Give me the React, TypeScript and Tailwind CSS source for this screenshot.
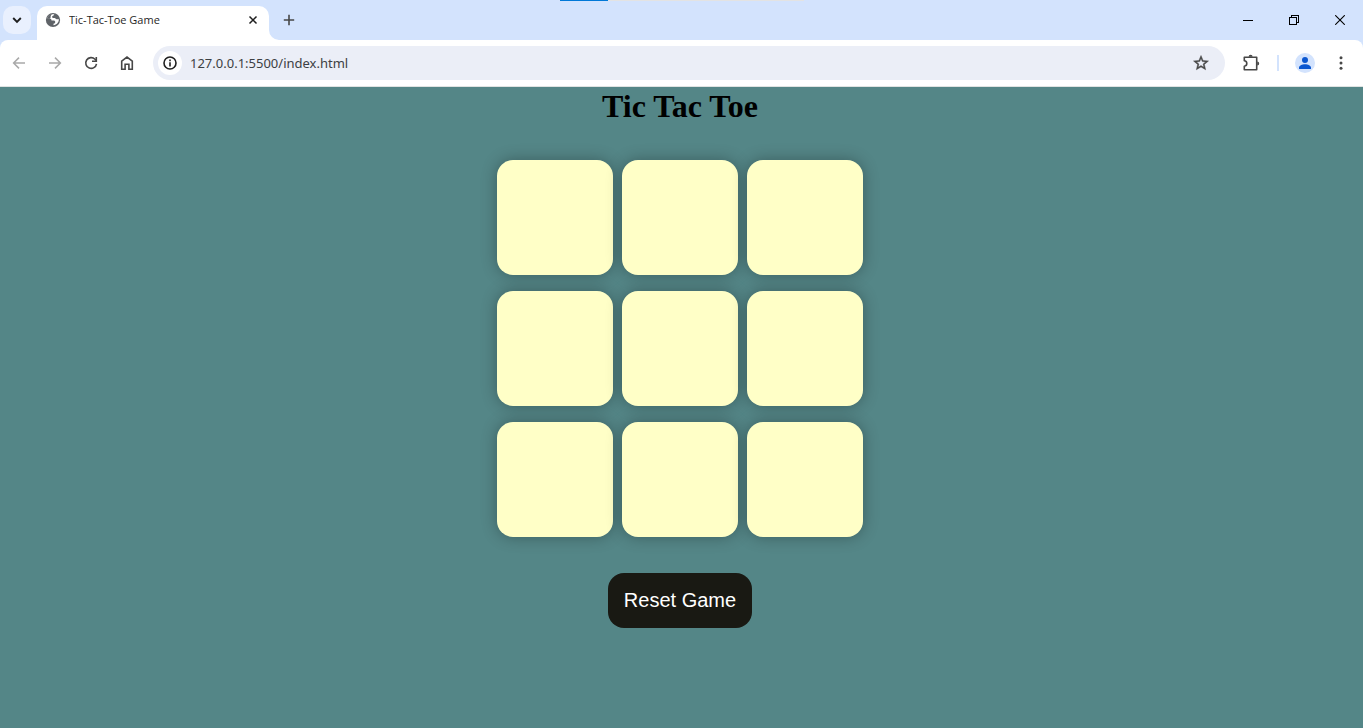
import React, { useState } from "react";

const iconButton = "flex size-9 shrink-0 items-center justify-center rounded-full text-[#474747] hover:bg-black/5";
const arrowButton = "flex size-9 shrink-0 items-center justify-center text-[#a9a9a9]";

function TabStrip() {
  return (
    <header className="relative flex h-10 shrink-0 bg-[#d3e3fd]">
      <div className="absolute inset-x-0 top-0 mx-auto flex h-px w-61 bg-[#e3e3e3]">
        <div className="w-12 bg-[#0078d7]" />
      </div>
      <button aria-label="Search tabs" className="my-1.5 ml-[3px] flex size-7 items-center justify-center rounded-[10px] bg-[#e9f0fe] text-[#1f1f1f]">
        <svg width="10" height="10" viewBox="0 0 10 10" fill="none" stroke="currentColor" strokeWidth="1.9">
          <path d="M1.2 3 5 6.8 8.8 3" />
        </svg>
      </button>
      <div className="mt-1.5 ml-1.5 flex w-58 items-center rounded-t-[10px] bg-white pr-2.5 pb-1.5 pl-2 text-[#1f1f1f]">
        <svg className="mr-2 shrink-0" width="16" height="16" viewBox="0 0 16 16">
          <circle cx="8" cy="8" r="7.1" fill="#5f6368" />
          <path
            d="M9.2 2.3c.1.900-.7 1.500-1.700 1.700-.6.500-.5 1.300.3 1.900h2c.8 0 .9 1.300 1.800 1.300h2.300c0 3-2.200 5.500-5.400 6v-1.500c1.200 0 1.700-.6 1.700-1.700 0-1-.7-1.500-1.600-1.500H6.500c0-1.200-.8-1.900-2-1.900H2.300C2.500 4.300 5.200 1.900 9.200 2.300Z"
            fill="#fff"
          />
          <path d="M2 6.800C2.600 3.900 4.800 2.200 7.200 2.200 6 2.900 5.600 4 5.600 5.200c0 1-.8 1.600-1.700 1.600Z" fill="#5f6368" />
        </svg>
        <span className="grow truncate font-['Open_Sans',sans-serif] text-[11px] leading-4">Tic-Tac-Toe Game</span>
        <button aria-label="Close tab" className="flex size-3 items-center justify-center">
          <svg width="10" height="10" viewBox="0 0 10 10" stroke="currentColor" strokeWidth="1.5">
            <path d="m1.500 1.500 7 7M8.500 1.500l-7 7" />
          </svg>
        </button>
      </div>
      <svg className="shrink-0 self-end" width="10" height="10" viewBox="0 0 10 10">
        <path d="M0 0a10 10 0 0 0 10 10H0Z" fill="#fff" />
      </svg>
      <button aria-label="New tab" className="flex h-10 w-5 items-center justify-center text-[#474747]">
        <svg width="12" height="12" viewBox="0 0 12 12" stroke="currentColor" strokeWidth="1.600">
          <path d="M6 .8v10.400M.8 6h10.400" />
        </svg>
      </button>
      <div className="ml-auto flex text-black">
        <button aria-label="Minimize" className="flex w-[46px] items-center justify-center">
          <svg width="10" height="10" viewBox="0 0 10 10" shapeRendering="crispEdges">
            <path d="M0 5h10v1H0z" />
          </svg>
        </button>
        <button aria-label="Restore" className="flex w-[46px] items-center justify-center">
          <svg width="10" height="10" viewBox="0 0 10 10" fill="none" stroke="currentColor" shapeRendering="crispEdges">
            <path d="M.5 2.500h7v7h-7zM2.500 2.500v-2h7v7h-2" />
          </svg>
        </button>
        <button aria-label="Close" className="flex w-[46px] items-center justify-center">
          <svg width="10" height="10" viewBox="0 0 10 10" stroke="currentColor" strokeWidth="1.100">
            <path d="m.2.2 9.600 9.600M9.800.2.2 9.800" />
          </svg>
        </button>
      </div>
    </header>
  );
}

function Toolbar() {
  const [url, setUrl] = useState("127.0.0.1:5500/index.html");
  return (
    <div className="bg-[#d3e3fd]">
      <div className="flex h-[47px] items-center rounded-t-lg border-b border-[#dfe3e2] bg-white pr-1 pl-px">
        <button aria-label="Back" disabled className={arrowButton}>
          <svg width="16" height="16" viewBox="0 0 16 16" fill="none" stroke="currentColor" strokeWidth="1.500">
            <path d="M14 8H3M8 2.600 2.600 8 8 13.400" />
          </svg>
        </button>
        <button aria-label="Forward" disabled className={arrowButton}>
          <svg width="16" height="16" viewBox="0 0 16 16" fill="none" stroke="currentColor" strokeWidth="1.500">
            <path d="M2 8h11M8 2.600 13.400 8 8 13.400" />
          </svg>
        </button>
        <button aria-label="Reload" className={iconButton}>
          <svg width="16" height="16" viewBox="0 0 16 16" fill="none" stroke="currentColor" strokeWidth="1.600">
            <path d="M13.500 8.800A5.400 5.400 0 1 1 12 4.200L13.300 5.500" />
            <path d="M13.300 2v4.300H9" />
          </svg>
        </button>
        <button aria-label="Home" className={iconButton}>
          <svg width="16" height="16" viewBox="0 0 16 16" fill="none" stroke="currentColor" strokeWidth="1.600">
            <path d="M2.700 14.200V6.100L8 2.100l5.300 4v8.100H9.900V9.200H6.100v5Z" />
          </svg>
        </button>
        <div className="ml-2 flex h-[34px] grow items-center rounded-full bg-[#ebeef7] pr-4 pl-[5px]">
          <button aria-label="Site information" className="flex size-6 shrink-0 items-center justify-center rounded-full bg-white text-[#1f1f1f]">
            <svg width="14" height="14" viewBox="0 0 14 14">
              <circle cx="7" cy="7" r="6" fill="none" stroke="currentColor" strokeWidth="1.600" />
              <path d="M6.200 6.200h1.600v4.200H6.200zM6.200 3.600h1.600v1.600H6.200z" fill="currentColor" />
            </svg>
          </button>
          <input
            aria-label="Address"
            value={url}
            onChange={(e) => setUrl(e.target.value)}
            className="ml-2 min-w-0 grow bg-transparent font-['Noto_Sans',sans-serif] text-[13px] leading-5 text-[#3c4043] outline-none"
          />
          <button aria-label="Bookmark this tab" className="flex size-4 shrink-0 items-center justify-center text-[#474747]">
            <svg className="shrink-0" width="18" height="18" viewBox="0 0 24 24" fill="currentColor" stroke="currentColor" strokeWidth=".6">
              <path d="m22 9.240-7.190-.62L12 2 9.190 8.630 2 9.240l5.460 4.730L5.820 21 12 17.270 18.180 21l-1.630-7.030L22 9.240zM12 15.400l-3.760 2.270 1-4.280-3.320-2.880 4.380-.38L12 6.100l1.710 4.040 4.380.38-3.320 2.880 1 4.280L12 15.400z" />
            </svg>
          </button>
        </div>
        <button aria-label="Extensions" className={"ml-2 " + iconButton}>
          <svg width="18" height="18" viewBox="0 0 18 18" fill="none" stroke="currentColor" strokeWidth="1.600">
            <path d="M2.300 3.300h12.400v12.400H2.300v-3.500c1.600-.2 2.500-1.300 2.500-2.700S3.900 7 2.300 6.800Z" strokeLinejoin="round" />
            <path d="M6.600 2.800a2 2 0 0 1 4 0ZM15.200 7.400a2 2 0 0 1 0 4Z" fill="currentColor" stroke="none" />
          </svg>
        </button>
        <div className="mx-2 h-4 w-0.5 bg-[#d3e3fd]" />
        <button aria-label="Profile" className="flex size-9 shrink-0 items-center justify-center">
          <svg width="20" height="20" viewBox="0 0 20 20">
            <circle cx="10" cy="10" r="10" fill="#d3e3fd" />
            <path d="M10 4a3 3 0 1 1 0 6 3 3 0 0 1 0-6ZM4 16v-1.400C4 12.500 7 11.200 10 11.200s6 1.300 6 3.400V16Z" fill="#0b57d0" />
          </svg>
        </button>
        <button aria-label="Menu" className={iconButton}>
          <svg width="16" height="16" viewBox="0 0 16 16" fill="currentColor">
            <circle cx="8" cy="2.800" r="1.500" />
            <circle cx="8" cy="8" r="1.500" />
            <circle cx="8" cy="13.200" r="1.500" />
          </svg>
        </button>
      </div>
    </div>
  );
}

const lines = [
  [0, 1, 2], [3, 4, 5], [6, 7, 8],
  [0, 3, 6], [1, 4, 7], [2, 5, 8],
  [0, 4, 8], [2, 4, 6],
];

function Game() {
  const [cells, setCells] = useState<string[]>(Array(9).fill(""));
  const won = lines.some(([a, b, c]) => cells[a] !== "" && cells[a] === cells[b] && cells[b] === cells[c]);
  const turn = cells.filter(Boolean).length % 2 === 0 ? "O" : "X";

  const play = (index: number) => {
    if (won || cells[index]) return;
    setCells(cells.map((cell, i) => (i === index ? turn : cell)));
  };

  return (
    <main className="flex grow flex-col items-center bg-[#548687] pr-[3px] pb-8">
      <h1 className="font-['Liberation_Serif',serif] text-[32px] leading-[38px] font-bold text-black">Tic Tac Toe</h1>
      <div className="mt-[35px] grid grid-cols-3 gap-x-[9px] gap-y-4">
        {cells.map((cell, i) => (
          <button
            key={i}
            aria-label={"Square " + (i + 1)}
            onClick={() => play(i)}
            className="h-[115px] w-[116px] rounded-2xl bg-[#ffffc7] font-['Liberation_Sans',sans-serif] text-[50px] text-[#b0413e] shadow-[0_0_16px_rgba(0,0,0,0.3)]"
          >
            {cell}
          </button>
        ))}
      </div>
      <button
        onClick={() => setCells(Array(9).fill(""))}
        className="mt-9 rounded-2xl bg-[#191913] p-4 font-['Liberation_Sans',sans-serif] text-[20px] leading-[23px] text-white"
      >
        Reset Game
      </button>
    </main>
  );
}

export default function App() {
  return (
    <div className="flex min-h-screen flex-col">
      <TabStrip />
      <Toolbar />
      <Game />
    </div>
  );
}
